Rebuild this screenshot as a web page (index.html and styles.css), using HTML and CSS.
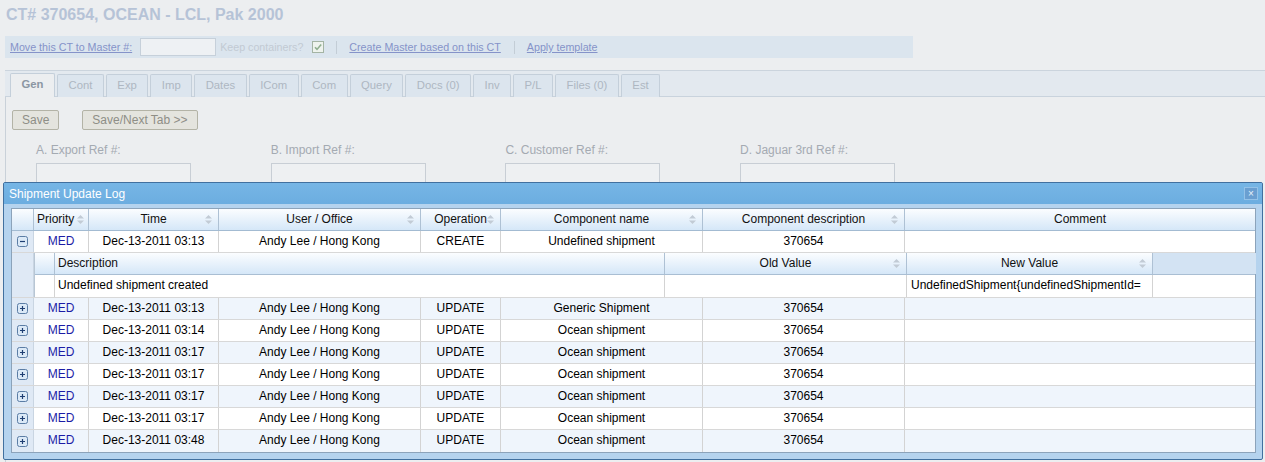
FILE: index.html
```html
<!DOCTYPE html>
<html>
<head>
<meta charset="utf-8">
<title>Shipment Update Log</title>
<link rel="stylesheet" href="styles.css">
</head>
<body>
<div class="page">
  <h1 class="title">CT# 370654, OCEAN - LCL, Pak 2000</h1>
  <div class="toolbar">
    <a class="link">Move this CT to Master #:</a>
    <span class="tb-input"></span>
    <span class="muted">Keep containers?</span>
    <span class="check"><svg width="12" height="12" viewBox="0 0 12 12"><rect x="0.5" y="0.5" width="11" height="11" fill="#eef3ee" stroke="#a4b4a4"/><path d="M3 6.2 L5 8.4 L9.2 3.4" fill="none" stroke="#8fae8f" stroke-width="1.6"/></svg></span>
    <span class="sep"></span>
    <a class="link">Create Master based on this CT</a>
    <span class="sep"></span>
    <a class="link">Apply template</a>
  </div>
  <div class="tabstrip">
    <div class="tab active">Gen</div>
    <div class="tab">Cont</div>
    <div class="tab">Exp</div>
    <div class="tab">Imp</div>
    <div class="tab">Dates</div>
    <div class="tab">ICom</div>
    <div class="tab">Com</div>
    <div class="tab">Query</div>
    <div class="tab">Docs (0)</div>
    <div class="tab">Inv</div>
    <div class="tab">P/L</div>
    <div class="tab">Files (0)</div>
    <div class="tab">Est</div>
  </div>
  <div class="panel">
    <div class="buttons">
      <button class="btn">Save</button>
      <button class="btn">Save/Next Tab &gt;&gt;</button>
    </div>
    <div class="form">
      <div class="field"><div class="label">A. Export Ref #:</div><div class="input"></div></div>
      <div class="field"><div class="label">B. Import Ref #:</div><div class="input"></div></div>
      <div class="field"><div class="label">C. Customer Ref #:</div><div class="input"></div></div>
      <div class="field"><div class="label">D. Jaguar 3rd Ref #:</div><div class="input"></div></div>
      <div class="field"><div class="label date">Dec-2011</div></div>
      <div class="field"><div class="label">E. Mode of Transport:</div></div>
      <div class="field"><div class="label">13. Client Mode:</div></div>
      <div class="field"><div class="label">G. Operator Of Last Change:</div></div>
    </div>
  </div>
</div>

<div class="dialog">
  <div class="dlg-title">
    <span>Shipment Update Log</span>
    <span class="close">×</span>
  </div>
  <div class="dlg-body">
    <div class="grid">
      <div class="row head">
        <div class="c exp"></div>
        <div class="c pri-head">Priority<svg class="sort pri-sort" width="7" height="9" viewBox="0 0 7 9"><path d="M3.5 0 L7 3.5 L0 3.5Z M0 5.5 L7 5.5 L3.5 9Z"/></svg></div>
        <div class="c">Time<svg class="sort" width="7" height="9" viewBox="0 0 7 9"><path d="M3.5 0 L7 3.5 L0 3.5Z M0 5.5 L7 5.5 L3.5 9Z"/></svg></div>
        <div class="c">User / Office<svg class="sort" width="7" height="9" viewBox="0 0 7 9"><path d="M3.5 0 L7 3.5 L0 3.5Z M0 5.5 L7 5.5 L3.5 9Z"/></svg></div>
        <div class="c">Operation<svg class="sort" width="7" height="9" viewBox="0 0 7 9"><path d="M3.5 0 L7 3.5 L0 3.5Z M0 5.5 L7 5.5 L3.5 9Z"/></svg></div>
        <div class="c">Component name<svg class="sort" width="7" height="9" viewBox="0 0 7 9"><path d="M3.5 0 L7 3.5 L0 3.5Z M0 5.5 L7 5.5 L3.5 9Z"/></svg></div>
        <div class="c">Component description<svg class="sort" width="7" height="9" viewBox="0 0 7 9"><path d="M3.5 0 L7 3.5 L0 3.5Z M0 5.5 L7 5.5 L3.5 9Z"/></svg></div>
        <div class="c last">Comment</div>
      </div>

      <div class="row">
        <div class="c exp"><svg width="11" height="11" viewBox="0 0 11 11"><rect x="0.5" y="0.5" width="10" height="10" rx="2" fill="#dbe9f7" stroke="#5b7da5"/><path d="M3 5.5 H8" stroke="#1f3f73" stroke-width="1.2"/></svg></div>
        <div class="c pri">MED</div>
        <div class="c">Dec-13-2011 03:13</div>
        <div class="c">Andy Lee / Hong Kong</div>
        <div class="c">CREATE</div>
        <div class="c">Undefined shipment</div>
        <div class="c">370654</div>
        <div class="c last"></div>
      </div>

      <div class="row detail">
        <div class="c exp"></div>
        <div class="sub">
          <div class="subrow head">
            <div class="c"></div>
            <div class="c left">Description</div>
            <div class="c">Old Value<svg class="sort" width="7" height="9" viewBox="0 0 7 9"><path d="M3.5 0 L7 3.5 L0 3.5Z M0 5.5 L7 5.5 L3.5 9Z"/></svg></div>
            <div class="c">New Value<svg class="sort" width="7" height="9" viewBox="0 0 7 9"><path d="M3.5 0 L7 3.5 L0 3.5Z M0 5.5 L7 5.5 L3.5 9Z"/></svg></div>
            <div class="c filler"></div>
          </div>
          <div class="subrow">
            <div class="c"></div>
            <div class="c left">Undefined shipment created</div>
            <div class="c"></div>
            <div class="c left nv">UndefinedShipment{undefinedShipmentId=</div>
            <div class="c last"></div>
          </div>
        </div>
      </div>

      <div class="row alt">
        <div class="c exp"><svg width="11" height="11" viewBox="0 0 11 11"><rect x="0.5" y="0.5" width="10" height="10" rx="2" fill="#dbe9f7" stroke="#5b7da5"/><path d="M3 5.5 H8 M5.5 3 V8" stroke="#1f3f73" stroke-width="1.2"/></svg></div>
        <div class="c pri">MED</div><div class="c">Dec-13-2011 03:13</div><div class="c">Andy Lee / Hong Kong</div><div class="c">UPDATE</div><div class="c">Generic Shipment</div><div class="c">370654</div><div class="c last"></div>
      </div>
      <div class="row">
        <div class="c exp"><svg width="11" height="11" viewBox="0 0 11 11"><rect x="0.5" y="0.5" width="10" height="10" rx="2" fill="#dbe9f7" stroke="#5b7da5"/><path d="M3 5.5 H8 M5.5 3 V8" stroke="#1f3f73" stroke-width="1.2"/></svg></div>
        <div class="c pri">MED</div><div class="c">Dec-13-2011 03:14</div><div class="c">Andy Lee / Hong Kong</div><div class="c">UPDATE</div><div class="c">Ocean shipment</div><div class="c">370654</div><div class="c last"></div>
      </div>
      <div class="row alt">
        <div class="c exp"><svg width="11" height="11" viewBox="0 0 11 11"><rect x="0.5" y="0.5" width="10" height="10" rx="2" fill="#dbe9f7" stroke="#5b7da5"/><path d="M3 5.5 H8 M5.5 3 V8" stroke="#1f3f73" stroke-width="1.2"/></svg></div>
        <div class="c pri">MED</div><div class="c">Dec-13-2011 03:17</div><div class="c">Andy Lee / Hong Kong</div><div class="c">UPDATE</div><div class="c">Ocean shipment</div><div class="c">370654</div><div class="c last"></div>
      </div>
      <div class="row">
        <div class="c exp"><svg width="11" height="11" viewBox="0 0 11 11"><rect x="0.5" y="0.5" width="10" height="10" rx="2" fill="#dbe9f7" stroke="#5b7da5"/><path d="M3 5.5 H8 M5.5 3 V8" stroke="#1f3f73" stroke-width="1.2"/></svg></div>
        <div class="c pri">MED</div><div class="c">Dec-13-2011 03:17</div><div class="c">Andy Lee / Hong Kong</div><div class="c">UPDATE</div><div class="c">Ocean shipment</div><div class="c">370654</div><div class="c last"></div>
      </div>
      <div class="row alt">
        <div class="c exp"><svg width="11" height="11" viewBox="0 0 11 11"><rect x="0.5" y="0.5" width="10" height="10" rx="2" fill="#dbe9f7" stroke="#5b7da5"/><path d="M3 5.5 H8 M5.5 3 V8" stroke="#1f3f73" stroke-width="1.2"/></svg></div>
        <div class="c pri">MED</div><div class="c">Dec-13-2011 03:17</div><div class="c">Andy Lee / Hong Kong</div><div class="c">UPDATE</div><div class="c">Ocean shipment</div><div class="c">370654</div><div class="c last"></div>
      </div>
      <div class="row">
        <div class="c exp"><svg width="11" height="11" viewBox="0 0 11 11"><rect x="0.5" y="0.5" width="10" height="10" rx="2" fill="#dbe9f7" stroke="#5b7da5"/><path d="M3 5.5 H8 M5.5 3 V8" stroke="#1f3f73" stroke-width="1.2"/></svg></div>
        <div class="c pri">MED</div><div class="c">Dec-13-2011 03:17</div><div class="c">Andy Lee / Hong Kong</div><div class="c">UPDATE</div><div class="c">Ocean shipment</div><div class="c">370654</div><div class="c last"></div>
      </div>
      <div class="row alt lastrow">
        <div class="c exp"><svg width="11" height="11" viewBox="0 0 11 11"><rect x="0.5" y="0.5" width="10" height="10" rx="2" fill="#dbe9f7" stroke="#5b7da5"/><path d="M3 5.5 H8 M5.5 3 V8" stroke="#1f3f73" stroke-width="1.2"/></svg></div>
        <div class="c pri">MED</div><div class="c">Dec-13-2011 03:48</div><div class="c">Andy Lee / Hong Kong</div><div class="c">UPDATE</div><div class="c">Ocean shipment</div><div class="c">370654</div><div class="c last"></div>
      </div>
    </div>
  </div>
</div>
</body>
</html>
```

FILE: styles.css
```css
* { box-sizing: border-box; }

body {
  margin: 0;
  width: 1265px;
  height: 462px;
  overflow: hidden;
  position: relative;
  background: #eceef0;
  font-family: "Liberation Sans", Arial, sans-serif;
  font-size: 12px;
  color: #000;
}

.page { padding-left: 5px; }

.title {
  margin: 0;
  height: 30px;
  line-height: 30px;
  padding-left: 1px;
  font-size: 16px;
  font-weight: bold;
  color: #b6c3d7;
}

.toolbar {
  margin-top: 6px;
  width: 908px;
  height: 22px;
  background: #dbe5ee;
  display: flex;
  align-items: center;
  padding-left: 5px;
  font-size: 10.7px;
}
.link { color: #8593c9; text-decoration: underline; }
.tb-input {
  width: 76px;
  height: 18px;
  margin: 0 4px 0 8px;
  background: #eef1f4;
  border: 1px solid #c6d0da;
}
.muted { color: #c2cad3; }
.check { display: flex; margin: 0 12px 0 9px; }
.sep { width: 1px; height: 13px; background: #c3cdd6; margin-right: 12px; }
.sep + .link + .sep { margin-left: 13px; }

.tabstrip {
  margin-top: 12px;
  height: 27px;
  border-top: 1px solid #cbd4dd;
  border-bottom: 1px solid #c9d3dd;
  background: #e3e9ef;
  display: flex;
  align-items: flex-end;
  padding-left: 5px;
}
.tab {
  height: 23px;
  line-height: 21px;
  padding: 0 10.5px;
  margin-right: 2px;
  margin-bottom: -1px;
  border: 1px solid #c4cfda;
  border-bottom: none;
  border-radius: 2px 2px 0 0;
  background: #dce5ee;
  color: #aeb7c2;
  font-size: 11.3px;
}
.tab.active {
  background: #eceef0;
  color: #8b96a3;
  font-weight: bold;
  height: 24px;
}

.panel {
  border-left: 1px solid #c9d1d9;
  height: 380px;
  padding: 13px 0 0 6px;
}
.buttons { display: flex; gap: 23px; }
.btn {
  height: 20px;
  padding: 0 9px;
  font: 12px "Liberation Sans", Arial, sans-serif;
  color: #8e8e86;
  background: #e4e4de;
  border: 1px solid #b3b3a6;
  border-radius: 2px;
}
.form {
  margin-top: 13px;
  padding-left: 24px;
  display: grid;
  grid-template-columns: repeat(4, 234.7px);
  row-gap: 3px;
}
.label { height: 14px; line-height: 14px; color: #a4aab2; }
.label.date { padding-left: 96px; }
.input {
  margin-top: 6px;
  width: 155px;
  height: 23px;
  border: 1px solid #c8ced5;
  background: #eef0f2;
}

/* Dialog overlay */
.dialog {
  position: absolute;
  left: 3px;
  top: 182px;
  width: 1260px;
  height: 278px;
  border: 1px solid #41709f;
  border-radius: 2px;
  background: #b5d3ee;
}
.dlg-title {
  height: 21px;
  background: linear-gradient(rgba(106, 176, 228, 0.84), rgba(98, 168, 222, 0.88));
  color: #fff;
  padding-left: 5px;
  display: flex;
  align-items: center;
  justify-content: space-between;
}
.close {
  width: 14px;
  height: 13px;
  margin-right: 4px;
  background: #6a9fd1;
  border: 1px solid #94c2e8;
  color: #e8f2fb;
  font-size: 10px;
  line-height: 11px;
  text-align: center;
}
.dlg-body { padding: 4px 7px 0 7px; }

.grid {
  width: 1245px;
  border: 1px solid #8ca3ba;
  background: #fff;
}
.row {
  display: grid;
  grid-template-columns: 22px 55px 130px 202px 80px 202px 202px 350px;
  height: 22px;
  border-bottom: 1px solid #d8d8d8;
}
.row.lastrow { border-bottom: none; }
.row.alt { background: #eff5fc; }
.c {
  position: relative;
  border-right: 1px solid #d3d3d3;
  text-align: center;
  line-height: 21px;
  white-space: nowrap;
  overflow: hidden;
}
.c.last { border-right: none; }
.c.exp {
  background: #dfe9f5;
  display: flex;
  align-items: center;
  justify-content: center;
  border-right-color: #c9d5e2;
}
.c.pri { color: #1c1ca6; }

.head {
  background: linear-gradient(#fbfdff, #d5e7f8);
  border-bottom: 1px solid #a3bbd2;
}
.head .c { border-right-color: #aec1d4; color: #111; }
.head .c.exp { background: transparent; }
.head .c.pri-head { text-align: left; padding-left: 3px; }
.sort {
  position: absolute;
  right: 6px;
  top: 6px;
  fill: #c2cbd5;
}
.sort.pri-sort { right: 4px; }

.row.detail {
  grid-template-columns: 22px 1221px;
  height: 45px;
}
.sub { border-left: 1px solid #b8c6d4; }
.subrow {
  display: grid;
  grid-template-columns: 20px 610px 242px 246px 103px;
  height: 22px;
}
.subrow.head { border-bottom: 1px solid #a9bed3; }
.subrow .c.left { text-align: left; padding-left: 3px; }
.subrow .c.nv { padding-left: 4px; }
.subrow.head .c.filler {
  background: #d3e3f3;
  border-right: none;
}
```
